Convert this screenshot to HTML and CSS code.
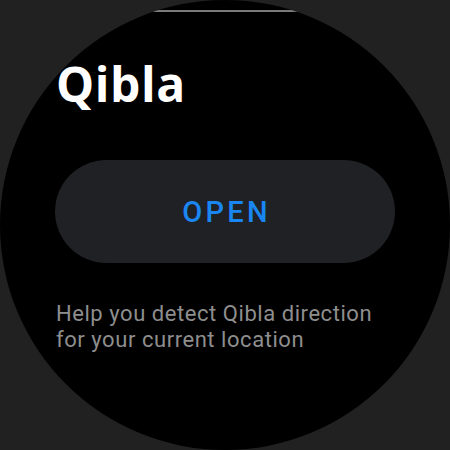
FILE: index.html
```html
<!DOCTYPE html>
<html>
<head>
<meta charset="utf-8">
<link rel="stylesheet" href="styles.css">
</head>
<body>
<div class="watch">
  <div class="scroll-bar"></div>
  <h1 class="title">Qibla</h1>
  <button class="open-btn">OPEN</button>
  <p class="desc">Help you detect Qibla direction for your current location</p>
</div>
</body>
</html>
```
FILE: styles.css
```css
html, body {
  margin: 0;
  padding: 0;
  background: #212121;
}
.watch {
  width: 450px;
  height: 450px;
  border-radius: 50%;
  background: #000;
  box-sizing: border-box;
  padding: 0 55px;
  display: flex;
  flex-direction: column;
  overflow: hidden;
}
.scroll-bar {
  align-self: center;
  width: 145px;
  height: 2px;
  margin-top: 10px;
  background: #7a7a7a;
}
.title {
  margin: 49px 0 0 1px;
  font-family: "Open Sans", sans-serif;
  font-weight: 700;
  font-size: 48px;
  letter-spacing: 0.6px;
  line-height: 46px;
  color: #fff;
}
.open-btn {
  margin-top: 53px;
  height: 103px;
  width: 340px;
  border: none;
  border-radius: 52px;
  background: #202124;
  color: #1a86f2;
  font-family: Roboto, sans-serif;
  font-weight: 500;
  font-size: 29px;
  letter-spacing: 3.3px;
  padding: 0 0 0 3px;
  display: flex;
  align-items: center;
  justify-content: center;
}
.desc {
  margin: 38px 0 0 1px;
  font-family: Roboto, sans-serif;
  font-size: 22px;
  letter-spacing: 0.55px;
  line-height: 26px;
  color: #8e8e8e;
  width: 335px;
}
```
